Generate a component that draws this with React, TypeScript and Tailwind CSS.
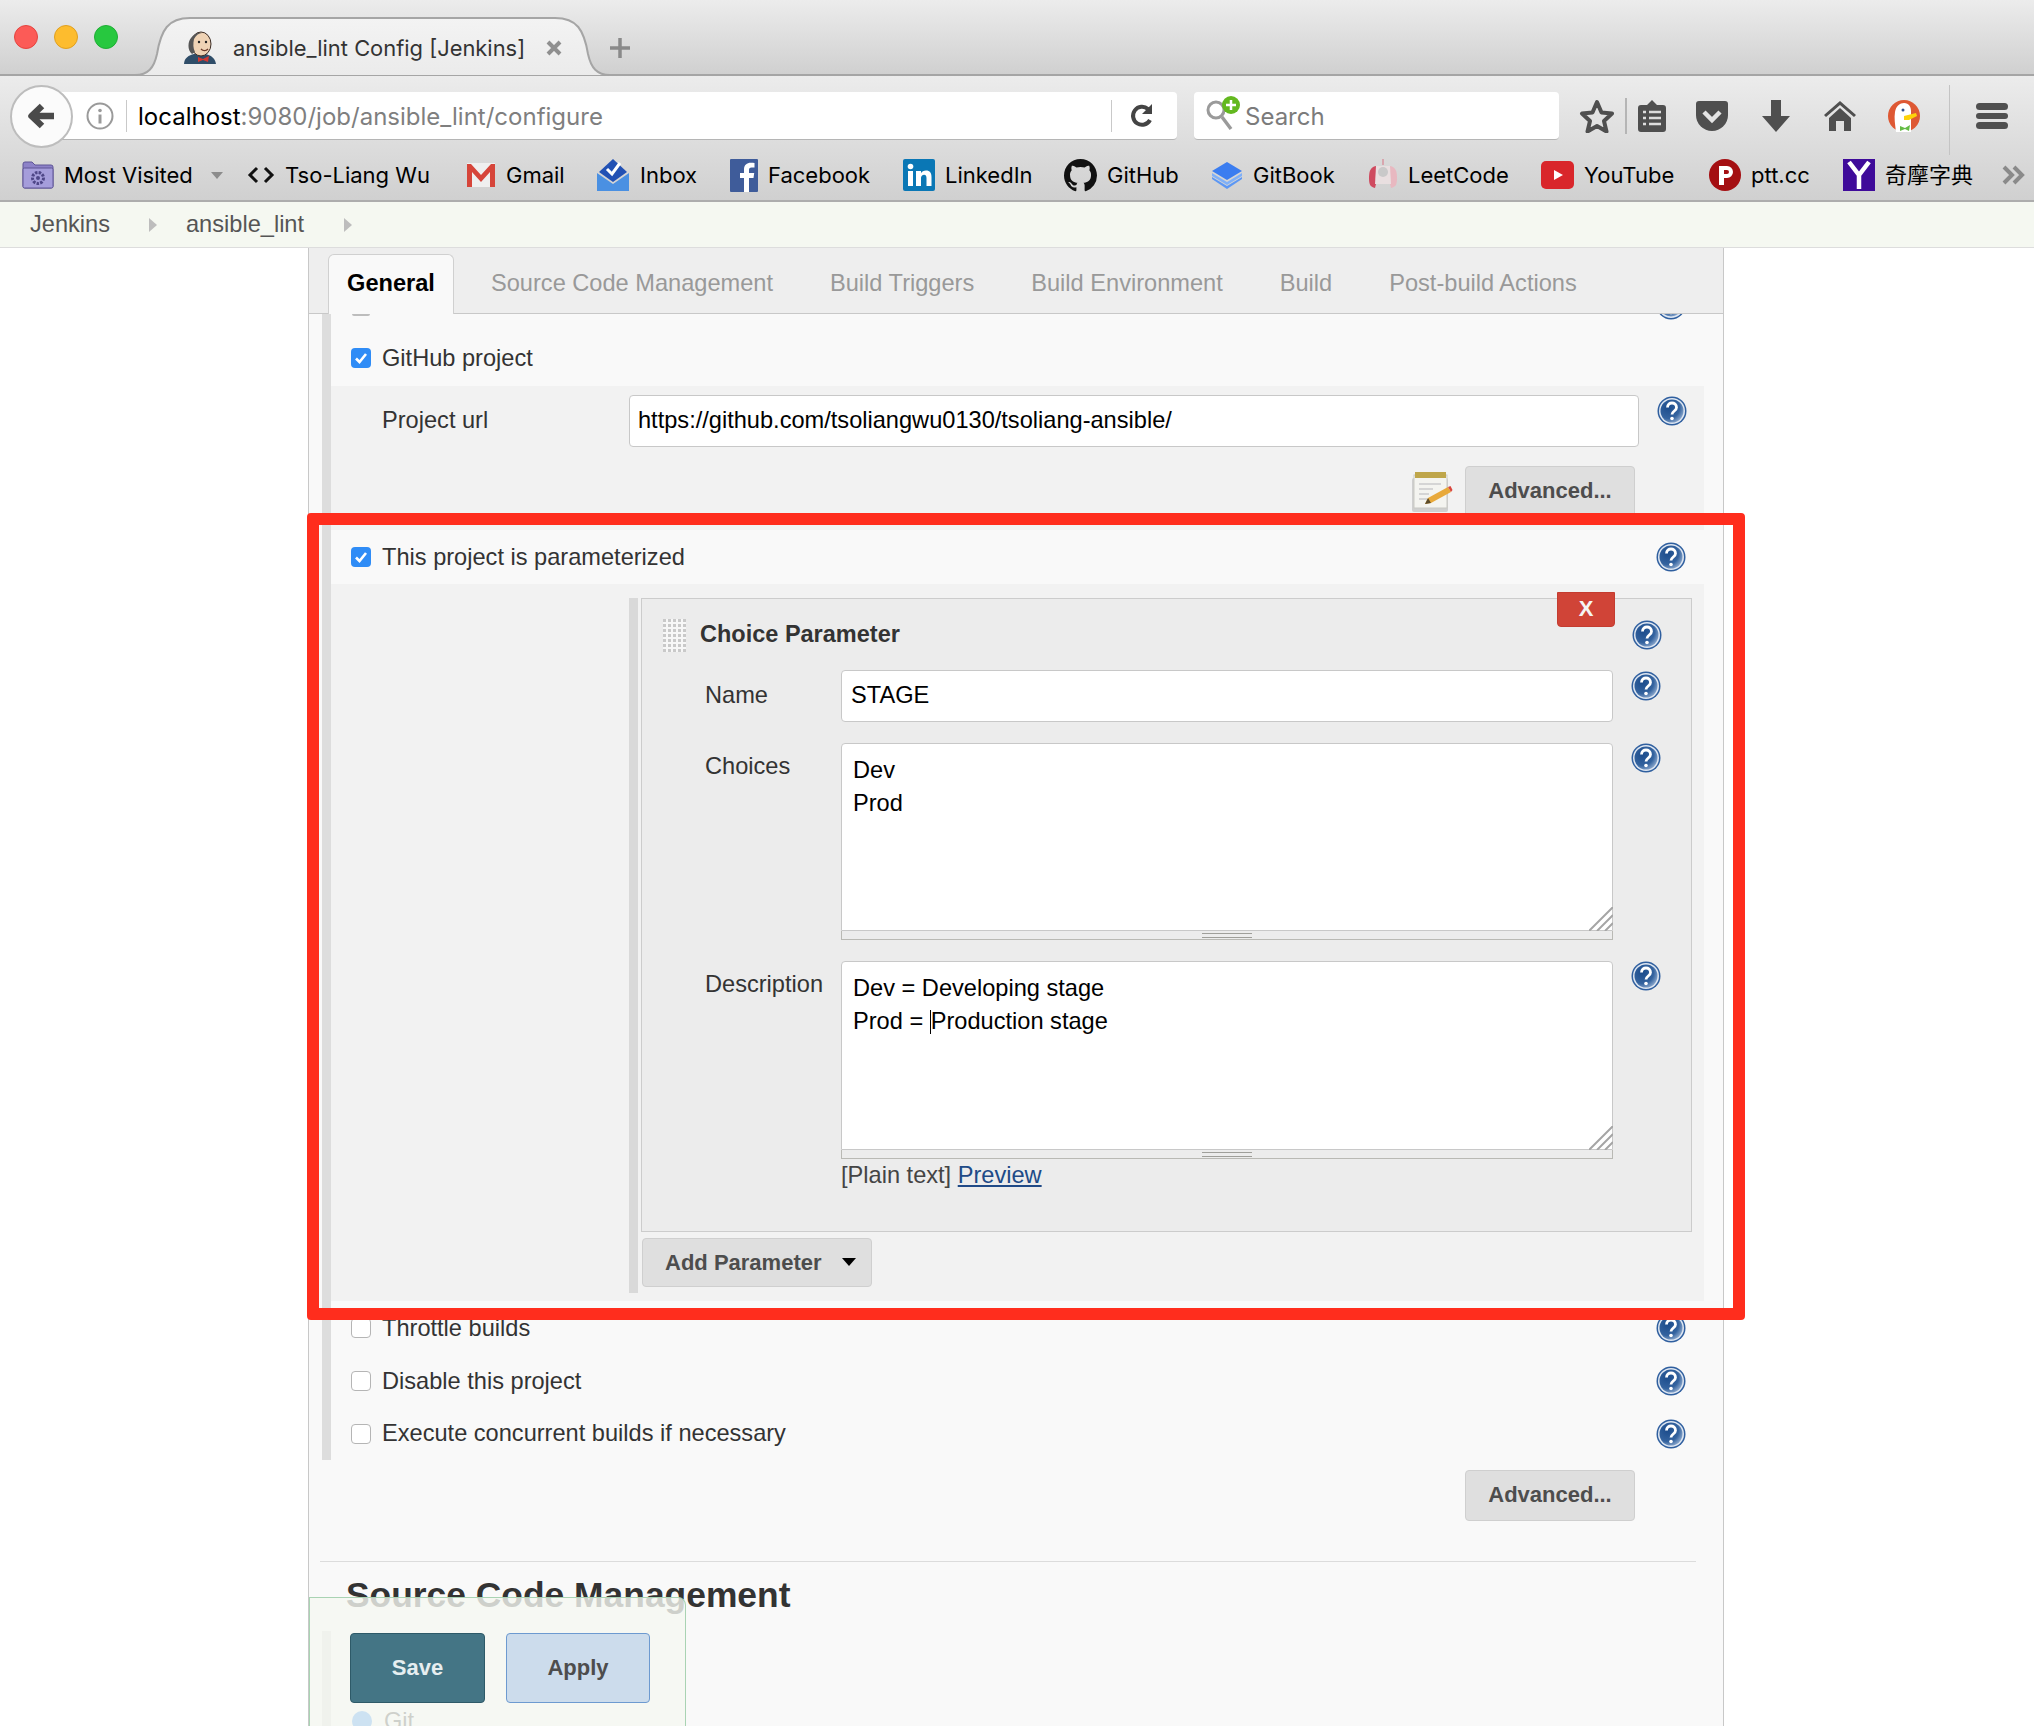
/* ─── Toolbar + bookmark icons ─── */
const JenkinsIcon = () => (
  <svg width="34" height="34" viewBox="0 0 34 34">
    <path d="M1 33c0-6 5-9 10-10l11 0c6 1 10 4 11 10z" fill="#2f4d68" />
    <path d="M15 26l5 2 6-3-1 6-5-2-5 2z" fill="#d33833" />
    <ellipse cx="18" cy="13" rx="10" ry="12" fill="#efd3b5" stroke="#3a2a22" strokeWidth="1" />
    <path d="M8 7c-3 3-4 12 1 16l3-2c-2-4-2-8-1-13 2-4 5-6 8-6-4-1-8 1-11 5z" fill="#555" />
    <circle cx="16" cy="11" r="1.2" fill="#222" />
    <circle cx="23" cy="11" r="1.2" fill="#222" />
    <path d="M18 18c2 2 5 2 7 0" stroke="#6b3a2a" strokeWidth="1.4" fill="none" />
  </svg>
);

const FolderIcon = () => (
  <svg width="32" height="30" viewBox="0 0 32 30">
    <path d="M1 4a2 2 0 0 1 2-2h7l3 3h16a2 2 0 0 1 2 2v19a2 2 0 0 1-2 2H3a2 2 0 0 1-2-2z" fill="#8d82c8" stroke="#5e5596" />
    <rect x="1" y="8" width="30" height="20" rx="1.5" fill="#a59ddb" stroke="#5e5596" />
    <circle cx="16" cy="18" r="5.5" fill="none" stroke="#4f4788" strokeWidth="3" strokeDasharray="2.5 1.2" />
    <circle cx="16" cy="18" r="2" fill="#4f4788" />
  </svg>
);

const GmailIcon = () => (
  <svg width="30" height="26" viewBox="0 0 30 26">
    <rect x="1" y="1" width="28" height="24" fill="#efefef" />
    <path d="M1 25V2h4l10 11L25 2h4v23h-5V10l-9 10L6 10v15z" fill="#d6453a" />
  </svg>
);

const InboxIcon = () => (
  <svg width="34" height="32" viewBox="0 0 34 32">
    <path d="M17 0l14 13-14 10L3 13z" fill="#2251b4" />
    <path d="M11 10l5 5 8-11" stroke="#fff" strokeWidth="3" fill="none" />
    <path d="M1 14l16 11 16-11v18H1z" fill="#4a90e2" />
  </svg>
);

const FacebookIcon = () => (
  <svg width="28" height="33" viewBox="0 0 28 33">
    <rect width="28" height="33" rx="1" fill="#3f5c9a" />
    <path d="M19 33V19h4.500l.7-5H19v-3c0-1.500.6-2.500 2.500-2.500H24.500V4c-1-.1-2.200-.2-3.800-.2-3.700 0-6.700 2.200-6.700 6.500V14H10v5h4v14z" fill="#fff" />
  </svg>
);

const LinkedInIcon = () => (
  <svg width="32" height="32" viewBox="0 0 32 32">
    <rect width="32" height="32" rx="2" fill="#0a77b5" />
    <rect x="5" y="12" width="5" height="15" fill="#fff" />
    <circle cx="7.500" cy="7.500" r="2.800" fill="#fff" />
    <path d="M13 12h5v2.200c1-1.500 2.700-2.600 5-2.600 4 0 5.500 2.500 5.500 6.500V27h-5v-8c0-2-.6-3.300-2.400-3.300S18 17 18 19v8h-5z" fill="#fff" />
  </svg>
);

const GitHubIcon = () => (
  <svg width="33" height="33" viewBox="0 0 16 16" fill="#111">
    <path d="M8 0C3.580 0 0 3.580 0 8c0 3.540 2.290 6.530 5.470 7.590.4.070.55-.17.55-.38 0-.19-.01-.82-.01-1.490-2.010.37-2.530-.49-2.690-.94-.09-.23-.48-.94-.82-1.130-.28-.15-.68-.52-.01-.53.63-.01 1.080.58 1.230.82.720 1.210 1.870.87 2.330.66.070-.52.280-.87.510-1.070-1.780-.2-3.640-.89-3.640-3.950 0-.87.310-1.590.82-2.150-.08-.2-.36-1.020.08-2.120 0 0 .67-.21 2.200.82.640-.18 1.320-.27 2-.27s1.360.09 2 .27c1.530-1.040 2.200-.82 2.200-.82.44 1.100.16 1.920.08 2.120.51.560.82 1.270.82 2.150 0 3.070-1.870 3.750-3.650 3.950.29.250.54.730.54 1.480 0 1.070-.01 1.930-.01 2.200 0 .21.150.46.550.38A8.013 8.013 0 0 0 16 8c0-4.420-3.580-8-8-8z" />
  </svg>
);

const GitBookIcon = () => (
  <svg width="32" height="30" viewBox="0 0 32 30">
    <path d="M16 2l15 9-15 9L1 11z" fill="#3b7df0" />
    <path d="M1 13l15 9 15-9v3L16 25 1 16z" fill="#7fb0f8" />
    <path d="M1 17l15 9 15-9v2L16 29 1 19z" fill="#5c97f4" />
  </svg>
);

const LeetCodeIcon = () => (
  <svg width="30" height="32" viewBox="0 0 30 32">
    <path d="M8 7c-6 1-7 6-7 12s1 9 6 10l1-4z" fill="#cf4a5f" />
    <path d="M22 7c6 1 7 6 7 12s-1 9-6 10l-1-4z" fill="#e8b8c0" />
    <path d="M8 7h14l1 18H7z" fill="#e9dfe0" />
    <circle cx="15" cy="13" r="5" fill="#c9c9c9" />
    <path d="M15 0v6" stroke="#d8a6ae" strokeWidth="2" />
  </svg>
);

const YouTubeIcon = () => (
  <svg width="33" height="28" viewBox="0 0 33 28">
    <rect width="33" height="28" rx="5" fill="#d9262b" />
    <path d="M13 9l9 5-9 5z" fill="#fff" />
  </svg>
);

const PttIcon = () => (
  <svg width="32" height="32" viewBox="0 0 32 32">
    <circle cx="16" cy="16" r="16" fill="#a40f12" />
    <path d="M10 7h8a6 6 0 0 1 0 12h-3v7h-5zM15 11v4h3a2 2 0 0 0 0-4z" fill="#fff" fillRule="evenodd" />
  </svg>
);

const YahooIcon = () => (
  <svg width="32" height="32" viewBox="0 0 32 32">
    <rect width="32" height="32" fill="#3f0b9a" />
    <path d="M6 3l10 13L26 3M16 16v14" stroke="#fff" strokeWidth="4.5" fill="none" />
  </svg>
);

const Code = () => (
  <svg width="28" height="20" viewBox="0 0 28 20" fill="none" stroke="#111" strokeWidth="3">
    <path d="M10 3L3 10l7 7M18 3l7 7-7 7" />
  </svg>
);

const bookmarks = [
  { label: "Most Visited", icon: <FolderIcon />, width: "w-[225px]", caret: true },
  { label: "Tso-Liang Wu", icon: <Code />, width: "w-[219px]" },
  { label: "Gmail", icon: <GmailIcon />, width: "w-[130px]" },
  { label: "Inbox", icon: <InboxIcon />, width: "w-[134px]" },
  { label: "Facebook", icon: <FacebookIcon />, width: "w-[173px]" },
  { label: "LinkedIn", icon: <LinkedInIcon />, width: "w-[161px]" },
  { label: "GitHub", icon: <GitHubIcon />, width: "w-[147px]" },
  { label: "GitBook", icon: <GitBookIcon />, width: "w-[157px]" },
  { label: "LeetCode", icon: <LeetCodeIcon />, width: "w-[173px]" },
  { label: "YouTube", icon: <YouTubeIcon />, width: "w-[168px]" },
  { label: "ptt.cc", icon: <PttIcon />, width: "w-[134px]" },
  { label: "奇摩字典", icon: <YahooIcon />, width: "w-[169px]" },
];

const HelpIcon = () => (
  <svg width="30" height="30" viewBox="0 0 30 30" className="shrink-0">
    <defs>
      <radialGradient id="helpFill" cx="35%" cy="35%" r="80%">
        <stop offset="0%" stopColor="#1c4c8c" />
        <stop offset="60%" stopColor="#34639f" />
        <stop offset="100%" stopColor="#a9bfdc" />
      </radialGradient>
    </defs>
    <circle cx="15" cy="15" r="14.500" fill="#2f5f9f" />
    <circle cx="15" cy="15" r="13" fill="#dfe7f2" />
    <circle cx="15" cy="15" r="11.500" fill="url(#helpFill)" />
    <path d="M10.500 11.500c0-6 9-6 9 0 0 3.500-4.500 3.500-4.500 7" stroke="#fff" strokeWidth="2.800" fill="none" />
    <circle cx="15" cy="22.500" r="1.800" fill="#fff" />
  </svg>
);

const Checkbox = ({ checked = false }: { checked?: boolean }) =>
  checked ? (
    <span className="flex h-5 w-5 shrink-0 items-center justify-center rounded-[4px] bg-[#2f8cf6]">
      <svg width="14" height="14" viewBox="0 0 14 14" fill="none" stroke="#fff" strokeWidth="2.600">
        <path d="M2 7.500l3.500 3.500L12 3" />
      </svg>
    </span>
  ) : (
    <span className="h-5 w-5 shrink-0 rounded-[4px] border border-[#b5b5b5] bg-white" />
  );

const NotepadIcon = () => (
  <svg width="42" height="42" viewBox="0 0 42 42">
    <rect x="1" y="7" width="36" height="34" rx="2" fill="#cfcfcf" />
    <rect x="3" y="4" width="33" height="33" fill="#f4f4f0" stroke="#c9c9c4" />
    <rect x="4" y="1" width="31" height="6" fill="#bfa64a" />
    <path d="M8 13h22M8 18h14M8 23h10M8 28h8" stroke="#d5d5d5" strokeWidth="2" />
    <path d="M14 33l3-6 20-11 3 5-20 11z" fill="#e8a93a" />
    <path d="M37 16l3 5 1.500-2-2-4z" fill="#d9463e" />
    <path d="M14 33l3-6 3 5z" fill="#5a4a2a" />
  </svg>
);

const AdvancedButton = () => (
  <button className="flex h-[51px] w-[170px] shrink-0 items-center justify-center rounded-[4px] border border-[#cfcfcf] bg-[#dfdfdf] pb-[2px] text-[22px] font-bold text-[#4d4d4d]">
    Advanced...
  </button>
);

const Grippie = () => (
  <div className="relative">
    <div className="flex h-[9px] justify-center border-x border-b border-[#b9b9b4] bg-[#ececec]">
      <div className="mt-[2px] h-[5px] w-[50px] border-y border-[#9f9f9a]" />
    </div>
    <svg width="24" height="24" viewBox="0 0 24 24" className="absolute bottom-[9px] right-0" stroke="#a5a5a5" strokeWidth="2">
      <path d="M0 24L24 0M8 24L24 8M16 24l8-8" />
    </svg>
  </div>
);

const ParamRow = ({ label, labelClass, children }: { label: string; labelClass: string; children: React.ReactNode }) => (
  <div className="flex">
    <div className={`w-[199px] shrink-0 pl-[63px] text-[23.6px] leading-[28px] text-[#333] ${labelClass}`}>{label}</div>
    {children}
  </div>
);

const OptionRow = ({ label, height }: { label: string; height: string }) => (
  <div className={`flex items-center pl-[20px] pr-[18px] ${height}`}>
    <Checkbox />
    <span className="ml-[11px] pt-[1px] text-[23.6px] text-[#333]">{label}</span>
    <div className="ml-auto">
      <HelpIcon />
    </div>
  </div>
);

export default function App() {
  return (
    <div className="relative h-[1726px] w-[2034px] overflow-hidden bg-white font-['Liberation_Sans',Arial,sans-serif]">
      {/* Tab strip */}
      <div className="relative flex h-[76px] items-center border-b-2 border-[#a5a5a5] bg-gradient-to-b from-[#ececec] to-[#d0d0d0] pl-[14px]">
        <div className="flex gap-[16px]">
          <span className="h-6 w-6 rounded-full border border-[#e5443f] bg-[#fc5b57]" />
          <span className="h-6 w-6 rounded-full border border-[#e0a020] bg-[#fdbc2e]" />
          <span className="h-6 w-6 rounded-full border border-[#1fae35] bg-[#27c83f]" />
        </div>
        <svg width="484" height="62" viewBox="0 0 484 62" className="absolute left-[130px] top-[16px]">
          <defs>
            <linearGradient id="tabFill" x1="0" y1="0" x2="0" y2="1">
              <stop offset="0%" stopColor="#f3f3f3" />
              <stop offset="100%" stopColor="#ebebeb" />
            </linearGradient>
          </defs>
          <path
            d="M0 59L5 59C18 59 24 52 27 38C31 14 38 2 60 2L425 2C447 2 454 14 458 38C461 52 467 59 480 59L484 59"
            fill="url(#tabFill)"
            stroke="#a5a5a5"
            strokeWidth="2"
          />
        </svg>
        <div className="relative ml-[65px] mt-[22px] flex items-center">
          <JenkinsIcon />
          <span className="ml-[16px] w-[313px] font-[Inter,sans-serif] text-[21.9px] text-[#333]">ansible_lint Config [Jenkins]</span>
          <svg width="16" height="16" viewBox="0 0 16 16" stroke="#8f8f8f" strokeWidth="4">
            <path d="M2 2l12 12M14 2L2 14" />
          </svg>
          <svg width="22" height="22" viewBox="0 0 22 22" stroke="#8a8a8a" strokeWidth="3.500" className="ml-[47px]">
            <path d="M11 1v20M1 11h20" />
          </svg>
        </div>
      </div>

      {/* Nav + bookmarks */}
      <div className="border-b-2 border-[#adadad] bg-gradient-to-b from-[#ececec] to-[#d0d0d0] font-[Inter,sans-serif]">
        <div className="flex h-[74px] items-center pl-[10px] pt-[6px]">
          <div className="z-10 flex h-[63px] w-[63px] shrink-0 items-center justify-center rounded-full border-2 border-[#bdbdbd] bg-[#fbfbfb]">
            <svg width="30" height="30" viewBox="0 0 30 30" fill="none" stroke="#4a4a4a" strokeWidth="6.500" strokeLinejoin="round">
              <path d="M27 15H6M15 5L4.500 15 15 25" />
            </svg>
          </div>
          <div className="-ml-[30px] flex h-[48px] w-[1134px] items-center rounded-[4px] border-b border-[#b5b5b5] bg-white pl-[43px]">
            <svg width="28" height="28" viewBox="0 0 28 28" fill="none" stroke="#9a9a9a" strokeWidth="2">
              <circle cx="14" cy="14" r="12.500" />
              <circle cx="14" cy="8.500" r="1.800" fill="#9a9a9a" stroke="none" />
              <path d="M14 12.500v9" strokeWidth="3" />
            </svg>
            <div className="ml-[12px] h-[32px] w-[1px] bg-[#c9c9c9]" />
            <span className="ml-[11px] w-[973px] pt-[2px] text-[24px] text-[#7f7f7f]">
              <span className="text-black">localhost</span>:9080/job/ansible_lint/configure
            </span>
            <div className="h-[32px] w-[1px] bg-[#c9c9c9]" />
            <svg width="26" height="28" viewBox="0 0 26 28" fill="none" stroke="#444" strokeWidth="4" className="ml-[18px]">
              <path d="M20 18a9 9 0 1 1-2-11" />
              <path d="M22 2v10H12z" fill="#444" stroke="none" />
            </svg>
          </div>
          <div className="ml-[17px] flex h-[48px] w-[365px] items-center rounded-[4px] border-b border-[#b5b5b5] bg-white pl-[11px]">
            <svg width="36" height="36" viewBox="0 0 36 36" className="-mt-[4px]">
              <circle cx="11" cy="14" r="8" fill="none" stroke="#9a9a9a" strokeWidth="3" />
              <path d="M17 21l9 12" stroke="#9a9a9a" strokeWidth="3.500" />
              <circle cx="26" cy="9" r="9" fill="#63b81f" />
              <path d="M26 4v10M21 9h10" stroke="#fff" strokeWidth="2.500" />
            </svg>
            <span className="ml-[4px] pt-[2px] text-[24px] text-[#7b7b7b]">Search</span>
          </div>
          <svg width="36" height="34" viewBox="0 0 36 34" fill="none" stroke="#4f4f4f" strokeWidth="4" strokeLinejoin="round" className="ml-[20px]">
            <path d="M18 3l4.500 10.500L33 14.500l-8 7.500 2.500 10.500L18 27l-9.500 5.500L11 22l-8-7.500 10.500-1z" />
          </svg>
          <div className="ml-[10px] h-[36px] w-[2px] bg-[#b5b5b5]" />
          <svg width="28" height="32" viewBox="0 0 28 32" className="ml-[11px]">
            <path d="M14 0l5 5h6a3 3 0 0 1 3 3v21a3 3 0 0 1-3 3H3a3 3 0 0 1-3-3V8a3 3 0 0 1 3-3h6z" fill="#4f4f4f" />
            <path d="M5 12h3M11 12h12M5 18h3M11 18h12M5 24h3M11 24h12" stroke="#ddd" strokeWidth="2.500" />
          </svg>
          <svg width="32" height="30" viewBox="0 0 32 30" className="ml-[30px]">
            <path d="M3 0h26a3 3 0 0 1 3 3v11a16 16 0 0 1-32 0V3a3 3 0 0 1 3-3z" fill="#4f4f4f" />
            <path d="M8 11l8 8 8-8" stroke="#e4e4e4" strokeWidth="4.500" fill="none" />
          </svg>
          <svg width="28" height="32" viewBox="0 0 28 32" className="ml-[34px]">
            <path d="M9 0h10v16h9L14 32 0 16h9z" fill="#4f4f4f" />
          </svg>
          <svg width="32" height="30" viewBox="0 0 32 30" className="ml-[34px]">
            <path d="M16 0l16 14-2 2L16 4 2 16l-2-2z" fill="#4f4f4f" />
            <path d="M16 7l11 10v13h-7V20h-8v10H5V17z" fill="#4f4f4f" />
          </svg>
          <svg width="32" height="32" viewBox="0 0 32 32" className="ml-[32px]">
            <circle cx="16" cy="16" r="16" fill="#de5833" />
            <path d="M8 32c-1-8-2-14-1-20 1-6 5-9 9-9 5 0 7 4 7 8v21z" fill="#fff" />
            <path d="M16 16l12-3 1 3-8 4-5 0z" fill="#fdd20a" />
            <path d="M12 26l5 2 5-3-1 6-4-2-5 2z" fill="#65bc46" />
            <circle cx="15" cy="10" r="1.500" fill="#2d4f8e" />
          </svg>
          <div className="ml-[29px] mt-[3px] h-[70px] w-[1px] self-start bg-[#c4c4c4]" />
          <div className="ml-[26px] flex w-[32px] flex-col gap-[3px]">
            <span className="h-[6.500px] rounded-full bg-[#4f4f4f]" />
            <span className="h-[6.500px] rounded-full bg-[#4f4f4f]" />
            <span className="h-[6.500px] rounded-full bg-[#4f4f4f]" />
          </div>
        </div>
        <div className="flex h-[50px] items-center pl-[22px] text-[22px] text-black">
          {bookmarks.map((b) => (
            <div key={b.label} className={`flex shrink-0 items-center gap-[10px] ${b.width}`}>
              {b.icon}
              <span className="font-[Inter,'Noto_Sans_CJK_TC',sans-serif]">{b.label}</span>
              {b.caret && <span className="ml-[8px] h-0 w-0 border-x-[6px] border-t-[7px] border-x-transparent border-t-[#8c8c8c]" />}
            </div>
          ))}
          <svg width="24" height="20" viewBox="0 0 24 20" fill="none" stroke="#8a8a8a" strokeWidth="4" className="-ml-[11px]">
            <path d="M3 2l8 8-8 8M13 2l8 8-8 8" />
          </svg>
        </div>
      </div>

      {/* Breadcrumb */}
      <div className="flex h-[46px] items-center border-b border-[#dddddd] bg-[#f5f8f1] pl-[30px] text-[23.6px] text-[#555]">
        <span className="w-[119px]">Jenkins</span>
        <span className="h-0 w-0 border-y-[7px] border-l-[8px] border-y-transparent border-l-[#bdbdbd]" />
        <span className="ml-[29px] w-[158px]">ansible_lint</span>
        <span className="h-0 w-0 border-y-[7px] border-l-[8px] border-y-transparent border-l-[#bdbdbd]" />
      </div>

      {/* Config panel */}
      <div className="ml-[308px] flex h-[1478px] w-[1416px] flex-col border-x border-[#c8c8c8] bg-[#f9f9f9]">
        {/* Tabs */}
        <div className="flex h-[66px] shrink-0 items-end border-b border-[#c8c8c8] bg-[#eeeeee] pl-[19px] text-[23.6px] text-[#999]">
          <div className="-mb-[1px] flex h-[60px] w-[126px] items-center justify-center rounded-t-[6px] border border-b-0 border-[#d0d0d0] bg-[#f9f9f9] pb-[2px] font-bold text-black">
            General
          </div>
          <div className="flex h-[59px] items-center">
            <span className="ml-[37px]">Source Code Management</span>
            <span className="ml-[57px]">Build Triggers</span>
            <span className="ml-[57px]">Build Environment</span>
            <span className="ml-[57px]">Build</span>
            <span className="ml-[57px]">Post-build Actions</span>
          </div>
        </div>

        {/* General section */}
        <div className="ml-[13px] mr-[19px] flex flex-col border-l-[9px] border-[#dddddd]">
          <div className="flex h-[6px] items-end justify-between overflow-hidden pl-[21px] pr-[18px]">
            <span className="mb-[4px] h-[2px] w-[18px] rounded-b bg-[#bdbdbd]" />
            <div className="shrink-0">
              <HelpIcon />
            </div>
          </div>
          <div className="flex h-[66px] items-center pl-[20px] pt-[10px]">
            <Checkbox checked />
            <span className="ml-[11px] pt-[2px] text-[23.6px] text-[#333]">GitHub project</span>
          </div>

          <div className="flex h-[144px] flex-col bg-[#f2f2f2] pt-[9px]">
            <div className="flex">
              <div className="w-[298px] pl-[51px] pt-[11px] text-[23.6px] leading-[28px] text-[#333]">Project url</div>
              <div className="flex h-[52px] w-[1010px] items-center rounded-[4px] border border-[#c8c8c8] bg-white pl-[8px] text-[23.6px] text-black">
                https://github.com/tsoliangwu0130/tsoliang-ansible/
              </div>
              <div className="ml-[18px] mt-[1px]">
                <HelpIcon />
              </div>
            </div>
            <div className="mt-[19px] flex items-center justify-end pr-[69px]">
              <NotepadIcon />
              <div className="ml-[12px]">
                <AdvancedButton />
              </div>
            </div>
          </div>

          <div className="flex h-[54px] items-center pl-[20px] pr-[18px]">
            <Checkbox checked />
            <span className="ml-[11px] pt-[1px] text-[23.6px] text-[#333]">This project is parameterized</span>
            <div className="ml-auto">
              <HelpIcon />
            </div>
          </div>

          {/* Parameter block */}
          <div className="h-[717px] bg-[#f2f2f2] pb-[9px] pl-[298px] pr-[12px] pt-[13px]">
            <div className="h-full border-l-[9px] border-[#d9d9d9] pl-[3px]">
              <div className="relative mt-[1px] flex h-[634px] flex-col border border-[#cccccc] bg-[#ececec]">
                <div className="absolute -top-[7px] right-[76px] flex h-[35px] w-[58px] items-center justify-center rounded-b-[4px] border border-[#c43c30] bg-[#d04437] pb-[2px] text-[22px] font-bold text-[#f5f5f5]">
                  X
                </div>
                <div className="flex h-[71px] shrink-0 items-center pl-[21px] pr-[29px] pt-[1px]">
                  <div className="grid h-[33px] w-[23px] grid-cols-[repeat(5,3px)] grid-rows-[repeat(7,3px)] gap-x-[2px] gap-y-[2px] bg-[#f7f7f7]">
                    {Array.from({ length: 35 }).map((_, i) => (
                      <span key={i} className="bg-[#c9c9c9]" />
                    ))}
                  </div>
                  <span className="ml-[14px] text-[23.5px] font-bold text-[#333]">Choice Parameter</span>
                  <div className="ml-auto">
                    <HelpIcon />
                  </div>
                </div>

                <ParamRow label="Name" labelClass="pt-[11px]">
                  <div className="flex h-[52px] w-[772px] items-center rounded-[4px] border border-[#c8c8c8] bg-white pl-[9px] text-[23.6px] text-black">
                    STAGE
                  </div>
                  <div className="ml-[18px] mt-[1px]">
                    <HelpIcon />
                  </div>
                </ParamRow>

                <div className="mt-[21px]">
                  <ParamRow label="Choices" labelClass="pt-[9px]">
                    <div className="w-[772px]">
                      <div className="h-[188px] rounded-t-[4px] border border-[#c8c8c8] bg-white pl-[11px] pt-[10px] text-[23.6px] leading-[33px] text-black">
                        <div>Dev</div>
                        <div>Prod</div>
                      </div>
                      <Grippie />
                    </div>
                    <div className="ml-[18px]">
                      <HelpIcon />
                    </div>
                  </ParamRow>
                </div>

                <div className="mt-[21px]">
                  <ParamRow label="Description" labelClass="pt-[9px]">
                    <div className="w-[772px]">
                      <div className="h-[189px] rounded-t-[4px] border border-[#c8c8c8] bg-white pl-[11px] pt-[10px] text-[23.6px] leading-[33px] text-black">
                        <div>Dev = Developing stage</div>
                        <div className="flex items-center">
                          Prod =&nbsp;<span className="h-[24px] w-[1px] bg-black" />
                          Production stage
                        </div>
                      </div>
                      <Grippie />
                      <div className="mt-[1px] text-[23.6px] leading-[30px] text-[#444]">
                        [Plain text] <span className="text-[#204a87] underline">Preview</span>
                      </div>
                    </div>
                    <div className="ml-[18px]">
                      <HelpIcon />
                    </div>
                  </ParamRow>
                </div>
              </div>
              <button className="ml-[1px] mt-[6px] flex h-[49px] w-[230px] items-center rounded-[4px] border border-[#cfcfcf] bg-[#dfdfdf] pb-[1px] pl-[22px] text-[22px] font-bold text-[#4d4d4d]">
                Add Parameter
                <span className="ml-[20px] h-0 w-0 border-x-[7px] border-t-[8px] border-x-transparent border-t-black" />
              </button>
            </div>
          </div>

          <OptionRow label="Throttle builds" height="h-[54px]" />
          <OptionRow label="Disable this project" height="h-[52px]" />
          <OptionRow label="Execute concurrent builds if necessary" height="h-[53px]" />
        </div>

        <div className="mt-[10px] flex shrink-0 justify-end pr-[88px]">
          <AdvancedButton />
        </div>
        <div className="mx-[11px] mt-[40px] h-[1px] w-[1376px] shrink-0 bg-[#dcdcdc]" />
        <h2 className="ml-[37px] mt-[13px] text-[35.4px] font-bold leading-[40px] text-[#333]">Source Code Management</h2>
        <div className="ml-[13px] mt-[16px] flex h-[110px] border-l-[9px] border-[#dddddd] pl-[21px] pt-[80px]">
          <span className="h-5 w-5 rounded-full bg-[#2f8cf2]" />
          <span className="ml-[12px] text-[23.6px] leading-[20px] text-[#333]">Git</span>
        </div>
      </div>

      {/* Sticky save bar */}
      <div className="absolute left-[309px] top-[1597px] flex h-[129px] w-[377px] items-start gap-[21px] rounded-tr-[8px] border border-b-0 border-[#a9d3b3] bg-[#f5f8f1]/80 pl-[40px] pt-[35px]">
        <button className="flex h-[70px] w-[135px] items-center justify-center rounded-[4px] border border-[#2e5a68] bg-[#447585] pb-[2px] text-[22px] font-bold text-[#e6eef0]">
          Save
        </button>
        <button className="flex h-[70px] w-[144px] items-center justify-center rounded-[4px] border border-[#6d9ad0] bg-[#ccdcec] pb-[2px] text-[22px] font-bold text-[#4d4d4d]">
          Apply
        </button>
      </div>

      {/* Red annotation frame */}
      <div className="pointer-events-none absolute left-[307px] top-[513px] h-[807px] w-[1438px] rounded-[4px] border-[12px] border-[#ff2d1d]" />
    </div>
  );
}
